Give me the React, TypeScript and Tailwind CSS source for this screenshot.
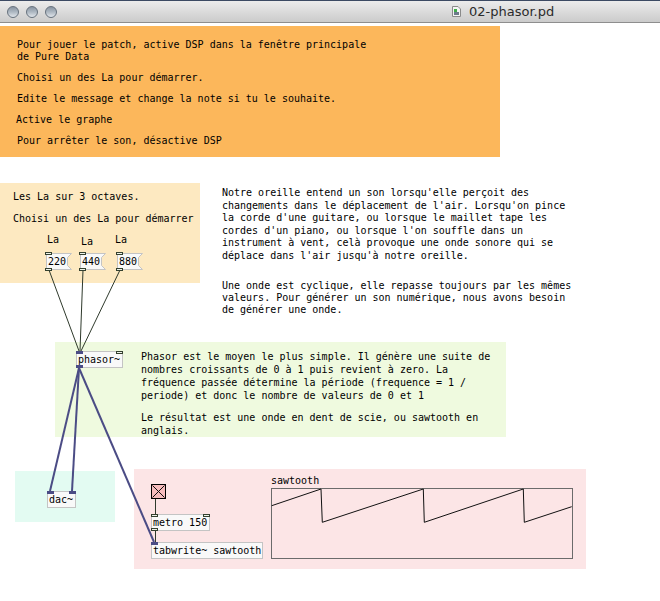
import React from "react";

type P = { r?: boolean; sig?: boolean };

function Port({ p, bottom }: { p: P; bottom?: boolean }) {
  const v = bottom ? "bottom-[-1px]" : "top-[-1px]";
  const h = p.r ? "right-[-1px]" : "left-[-1px]";
  const look = p.sig
    ? "bg-[#4b4c85]"
    : "border border-[#34402f] bg-[#eef3ea]";
  return <div className={`absolute w-[7px] h-[3px] ${v} ${h} ${look}`} />;
}

function Obj({
  pos,
  text,
  ins = [],
  outs = [],
}: {
  pos: string;
  text: string;
  ins?: P[];
  outs?: P[];
}) {
  return (
    <div
      className={`absolute h-[17px] border border-[#c4c4c4] bg-[#f9f9f9] leading-[15px] pl-[1px] whitespace-pre ${pos}`}
    >
      {text}
      {ins.map((p, i) => (
        <Port key={"i" + i} p={p} />
      ))}
      {outs.map((p, i) => (
        <Port key={"o" + i} p={p} bottom />
      ))}
    </div>
  );
}

function Msg({ pos, text }: { pos: string; text: string }) {
  return (
    <div className={`absolute w-[26px] h-[17px] ${pos}`}>
      <svg className="absolute inset-0" width="26" height="17">
        <polygon
          points="0.5,0.5 25.5,0.5 21.5,4.5 21.5,12.5 25.5,16.5 0.5,16.5"
          fill="#f9f9f9"
          stroke="#c4c4c4"
        />
      </svg>
      <div className="absolute left-[2px] top-[1px] leading-[15px]">{text}</div>
      <Port p={{}} />
      <Port p={{}} bottom />
    </div>
  );
}

function Light() {
  return (
    <div className="w-[12px] h-[12px] rounded-full border border-[#66717d] bg-linear-to-b from-[#8995a2] via-[#aeb8c2] to-[#e1e6eb]" />
  );
}

export default function App() {
  return (
    <div className="w-[660px] h-[601px] bg-white overflow-hidden flex flex-col font-['DejaVu_Sans_Mono',monospace] text-[10px] text-black">
      {/* title bar */}
      <div className="h-[23px] shrink-0 flex items-center border-t border-t-[#3c4a63] border-b border-b-[#8e8e8e] bg-linear-to-b from-[#ececec] to-[#cbcbcb]">
        <div className="flex gap-[7px] ml-[7px]">
          <Light />
          <Light />
          <Light />
        </div>
        <div className="ml-[395px] flex items-center gap-[8px]">
          <svg width="9" height="11" viewBox="0 0 9 11">
            <path d="M0.5 0.5 H6 L8.5 3 V10.5 H0.5 Z" fill="#f4f4f4" stroke="#8a8a8a" />
            <rect x="2" y="3" width="3" height="3" fill="#3fae49" />
            <rect x="2" y="6" width="5" height="3" fill="#6d7a8a" />
          </svg>
          <span className="font-['DejaVu_Sans',sans-serif] text-[13px] text-[#2b2b2b] leading-none">
            02-phasor.pd
          </span>
        </div>
      </div>

      {/* canvas */}
      <div className="relative flex-1">
        {/* orange canvas with its comments */}
        <div className="absolute left-0 top-[3px] w-[500px] h-[131px] bg-[#fcb75b] pl-[17px] pt-[13px] flex flex-col gap-[9px] leading-[12px]">
          <div>
            <div>Pour jouer le patch, active DSP dans la fenêtre principale</div>
            <div>de Pure Data</div>
          </div>
          <div>Choisi un des La pour démarrer.</div>
          <div>Edite le message et change la note si tu le souhaite.</div>
          <div className="-ml-px">Active le graphe</div>
          <div>Pour arrêter le son, désactive DSP</div>
        </div>

        {/* yellow canvas */}
        <div className="absolute left-0 top-[160px] w-[200px] h-[100px] bg-[#fde9c1] pl-[13px] pt-[8px] flex flex-col gap-[10px] leading-[12px]">
          <div>Les La sur 3 octaves.</div>
          <div>Choisi un des La pour démarrer</div>
          <div className="flex items-start pl-[34px] gap-[22px] -mt-[1px]">
            <span>La</span>
            <span className="mt-[2px]">La</span>
            <span>La</span>
          </div>
        </div>

        {/* green canvas */}
        <div className="absolute left-[55px] top-[319px] w-[451px] h-[95px] bg-[#effadf] pl-[86px] pt-[8px] flex flex-col gap-[9px] leading-[13px]">
          <div>
            <div>Phasor est le moyen le plus simple. Il génère une suite de</div>
            <div>nombres croissants de 0 à 1 puis revient à zero. La</div>
            <div>fréquence passée détermine la période (frequence = 1 /</div>
            <div>periode) et donc le nombre de valeurs de 0 et 1</div>
          </div>
          <div>
            <div>Le résultat est une onde en dent de scie, ou sawtooth en</div>
            <div>anglais.</div>
          </div>
        </div>

        {/* cyan canvas */}
        <div className="absolute left-[15px] top-[448px] w-[100px] h-[51px] bg-[#e3fbf2]" />

        {/* pink canvas */}
        <div className="absolute left-[134px] top-[446px] w-[452px] h-[100px] bg-[#fce5e6] pl-[137px] pt-[6px] leading-[12px]">
          <div>sawtooth</div>
        </div>

        {/* free comments */}
        <div className="absolute left-[222px] top-[164px] flex flex-col gap-[18px] leading-[12.5px]">
          <div>
            <div>Notre oreille entend un son lorsqu'elle perçoit des</div>
            <div>changements dans le déplacement de l'air. Lorsqu'on pince</div>
            <div>la corde d'une guitare, ou lorsque le maillet tape les</div>
            <div>cordes d'un piano, ou lorsque l'on souffle dans un</div>
            <div>instrument à vent, celà provoque une onde sonore qui se</div>
            <div>déplace dans l'air jusqu'à notre oreille.</div>
          </div>
          <div className="leading-[12px]">
            <div>Une onde est cyclique, elle repasse toujours par les mêmes</div>
            <div>valeurs. Pour générer un son numérique, nous avons besoin</div>
            <div>de générer une onde.</div>
          </div>
        </div>

        {/* cords */}
        <svg className="absolute inset-0 pointer-events-none" width="660" height="578">
          <g stroke="#2f3a2c" strokeWidth="1" fill="none">
            <line x1="49" y1="247" x2="79" y2="328" />
            <line x1="83" y1="247" x2="80" y2="328" />
            <line x1="120" y1="247" x2="81" y2="328" />
            <line x1="155.5" y1="476" x2="155.5" y2="491" />
            <line x1="155.5" y1="508" x2="155.5" y2="519" />
          </g>
          <g stroke="#4b4c85" strokeWidth="2" fill="none">
            <line x1="79" y1="345" x2="50" y2="468" />
            <line x1="79" y1="345" x2="72" y2="468" />
            <line x1="79" y1="345" x2="154" y2="519" />
          </g>
        </svg>

        {/* message boxes */}
        <Msg pos="left-[46px] top-[230px]" text="220" />
        <Msg pos="left-[80px] top-[230px]" text="440" />
        <Msg pos="left-[117px] top-[230px]" text="880" />

        {/* objects */}
        <Obj
          pos="left-[76px] top-[328px] w-[47px]"
          text="phasor~"
          ins={[{ sig: true }, { r: true }]}
          outs={[{ sig: true }]}
        />
        <Obj
          pos="left-[47px] top-[468px] w-[29px]"
          text="dac~"
          ins={[{ sig: true }, { sig: true, r: true }]}
        />
        <Obj
          pos="left-[151px] top-[491px] w-[59px]"
          text="metro 150"
          ins={[{}, { r: true }]}
          outs={[{}]}
        />
        <Obj
          pos="left-[151px] top-[519px] w-[112px]"
          text="tabwrite~ sawtooth"
          ins={[{ sig: true }]}
        />

        {/* toggle */}
        <div className="absolute left-[151px] top-[461px] w-[15px] h-[15px] border border-black bg-[#f6bcbd]">
          <svg className="absolute inset-0" width="13" height="13">
            <line x1="0.5" y1="0.5" x2="12.5" y2="12.5" stroke="#111" />
            <line x1="12.5" y1="0.5" x2="0.5" y2="12.5" stroke="#111" />
          </svg>
        </div>

        {/* graph */}
        <div className="absolute left-[271px] top-[465px] w-[302px] h-[71px] border border-[#6b6b6b]">
          <svg className="absolute left-[-1px] top-[-1px]" width="302" height="71">
            <polyline
              points="0.7,17.7 50,1 51.3,34.3 152.3,1 153.3,34.3 252.3,1 253.3,34.3 300.7,18.7"
              fill="none"
              stroke="#111"
              strokeWidth="1"
            />
          </svg>
        </div>
      </div>
    </div>
  );
}
